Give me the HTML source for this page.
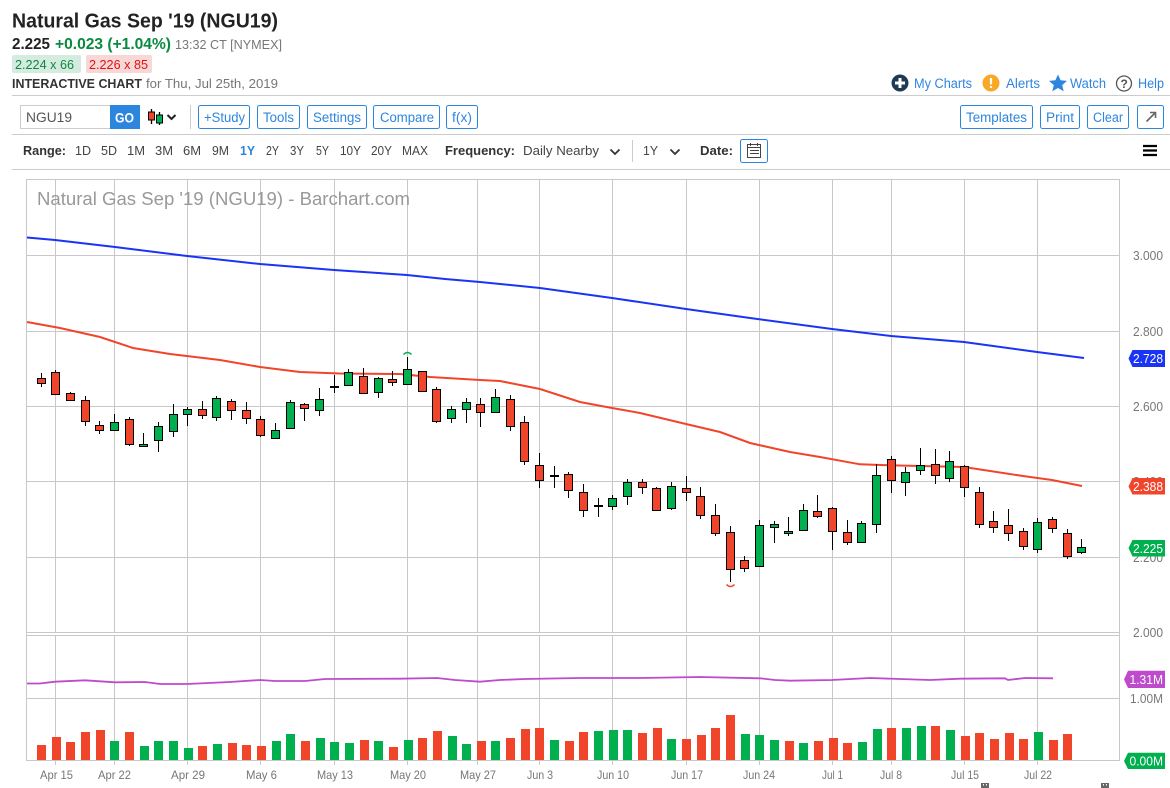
<!DOCTYPE html>
<html><head><meta charset="utf-8"><title>Natural Gas Sep '19 (NGU19)</title>
<style>
html,body{margin:0;padding:0;background:#fff;width:1170px;height:788px;overflow:hidden}
svg{display:block;position:absolute;left:0;top:0}
text{font-family:"Liberation Sans",sans-serif}
.b{fill:#2d86de;font-size:13.5px}
.r{fill:#444;font-size:13px}
.k{font-weight:bold;fill:#333;font-size:13px}
.a{fill:#777;font-size:12.5px}
.d{fill:#777;font-size:12px}
.t{fill:#fff;font-size:13px}
.btn{fill:#fff;stroke:#2d86de;stroke-width:1}
</style></head><body>
<svg width="1170" height="788" viewBox="0 0 1170 788" xmlns="http://www.w3.org/2000/svg">
<!-- header -->
<text x="12" y="27.5" font-size="20" font-weight="bold" fill="#222" textLength="266" lengthAdjust="spacingAndGlyphs">Natural Gas Sep '19 (NGU19)</text>
<text x="12" y="49" font-size="15.5" font-weight="bold" fill="#222" textLength="38" lengthAdjust="spacingAndGlyphs">2.225</text>
<text x="55" y="49" font-size="15.5" font-weight="bold" fill="#0a8a3f" textLength="116" lengthAdjust="spacingAndGlyphs">+0.023 (+1.04%)</text>
<text x="175" y="49" font-size="13" fill="#777" textLength="107" lengthAdjust="spacingAndGlyphs">13:32 CT [NYMEX]</text>
<rect x="12" y="55" width="69" height="18" rx="2" fill="#d5ebe0"/>
<text x="15" y="69" font-size="13" fill="#0a8a3f" textLength="59" lengthAdjust="spacingAndGlyphs">2.224 x 66</text>
<rect x="86" y="55" width="66" height="18" rx="2" fill="#f8d7d7"/>
<text x="89" y="69" font-size="13" fill="#e21212" textLength="59" lengthAdjust="spacingAndGlyphs">2.226 x 85</text>
<text x="12" y="88" class="k" textLength="130" lengthAdjust="spacingAndGlyphs">INTERACTIVE CHART</text>
<text x="146" y="88" font-size="13" fill="#777" textLength="132" lengthAdjust="spacingAndGlyphs">for Thu, Jul 25th, 2019</text>

<!-- top right links -->
<circle cx="900" cy="83" r="8.5" fill="#1f3a52"/><path d="M900 78v10M895 83h10" stroke="#fff" stroke-width="3"/>
<text x="914" y="88" class="b" textLength="58" lengthAdjust="spacingAndGlyphs">My Charts</text>
<circle cx="991" cy="83" r="8.5" fill="#f9a825"/><path d="M991 78v6.5M991 86v2" stroke="#fff" stroke-width="2.2"/>
<text x="1006" y="88" class="b" textLength="34" lengthAdjust="spacingAndGlyphs">Alerts</text>
<path d="M1058 74.5l2.6 5.8 6.4.6-4.8 4.2 1.5 6.2-5.7-3.3-5.7 3.3 1.5-6.2-4.8-4.2 6.4-.6z" fill="#2d86de"/>
<text x="1070" y="88" class="b" textLength="36" lengthAdjust="spacingAndGlyphs">Watch</text>
<circle cx="1124" cy="83.5" r="7.5" fill="none" stroke="#555" stroke-width="1.3"/>
<text x="1120.5" y="88" font-size="12" font-weight="bold" fill="#555">?</text>
<text x="1138" y="88" class="b" textLength="26" lengthAdjust="spacingAndGlyphs">Help</text>

<path d="M12 95.5H1170M12 134.5H1170M12 169.5H1170" stroke="#ccc" stroke-width="1"/>

<!-- toolbar -->
<rect x="20.5" y="105.5" width="90" height="23" fill="#fff" stroke="#ccc"/>
<text x="26" y="122" font-size="14" fill="#555" textLength="46" lengthAdjust="spacingAndGlyphs">NGU19</text>
<rect x="110" y="105" width="30" height="24" fill="#2d86de"/>
<text x="115" y="122.5" font-size="13.5" font-weight="bold" fill="#fff" textLength="19" lengthAdjust="spacingAndGlyphs">GO</text>
<path d="M151.5 109v15M159.5 112v13" stroke="#000" stroke-width="1.3"/>
<rect x="148.5" y="112" width="6" height="8" fill="#f1452b" stroke="#000"/>
<rect x="156.5" y="115" width="6" height="8" fill="#00af4d" stroke="#000"/>
<path d="M167.5 115l4 4 4-4" fill="none" stroke="#222" stroke-width="2"/>
<path d="M190.5 105V129" stroke="#ccc"/>
<rect class="btn" x="198.5" y="105.5" width="51" height="23" rx="2"/><text x="204" y="122" class="b" textLength="41" lengthAdjust="spacingAndGlyphs">+Study</text>
<rect class="btn" x="257.5" y="105.5" width="42" height="23" rx="2"/><text x="263" y="122" class="b" textLength="31" lengthAdjust="spacingAndGlyphs">Tools</text>
<rect class="btn" x="307.5" y="105.5" width="59" height="23" rx="2"/><text x="313" y="122" class="b" textLength="48" lengthAdjust="spacingAndGlyphs">Settings</text>
<rect class="btn" x="373.5" y="105.5" width="66" height="23" rx="2"/><text x="380" y="122" class="b" textLength="54" lengthAdjust="spacingAndGlyphs">Compare</text>
<rect class="btn" x="446.5" y="105.5" width="31" height="23" rx="2"/><text x="452" y="122" class="b" textLength="20" lengthAdjust="spacingAndGlyphs">f(x)</text>
<rect class="btn" x="960.5" y="105.5" width="72" height="23" rx="2"/><text x="966" y="122" class="b" textLength="61" lengthAdjust="spacingAndGlyphs">Templates</text>
<rect class="btn" x="1040.5" y="105.5" width="39" height="23" rx="2"/><text x="1046" y="122" class="b" textLength="28" lengthAdjust="spacingAndGlyphs">Print</text>
<rect class="btn" x="1087.5" y="105.5" width="41" height="23" rx="2"/><text x="1093" y="122" class="b" textLength="30" lengthAdjust="spacingAndGlyphs">Clear</text>
<rect class="btn" x="1137.5" y="105.5" width="26" height="23" rx="2"/>
<path d="M1146.5 121.5l9-9M1150 112.5h5.5v5.5" fill="none" stroke="#666" stroke-width="1.6"/>

<!-- range row -->
<text x="23" y="155" class="k" textLength="43" lengthAdjust="spacingAndGlyphs">Range:</text>
<g class="r">
<text x="75" y="155" class="r" textLength="16" lengthAdjust="spacingAndGlyphs">1D</text>
<text x="101" y="155" class="r" textLength="16" lengthAdjust="spacingAndGlyphs">5D</text>
<text x="127" y="155" class="r" textLength="18" lengthAdjust="spacingAndGlyphs">1M</text>
<text x="155" y="155" class="r" textLength="18" lengthAdjust="spacingAndGlyphs">3M</text>
<text x="183" y="155" class="r" textLength="18" lengthAdjust="spacingAndGlyphs">6M</text>
<text x="212" y="155" class="r" textLength="17" lengthAdjust="spacingAndGlyphs">9M</text>
<text x="240" y="155" font-size="13" font-weight="bold" fill="#2d86de" textLength="15" lengthAdjust="spacingAndGlyphs">1Y</text>
<text x="266" y="155" class="r" textLength="13" lengthAdjust="spacingAndGlyphs">2Y</text>
<text x="290" y="155" class="r" textLength="14" lengthAdjust="spacingAndGlyphs">3Y</text>
<text x="316" y="155" class="r" textLength="13" lengthAdjust="spacingAndGlyphs">5Y</text>
<text x="340" y="155" class="r" textLength="21" lengthAdjust="spacingAndGlyphs">10Y</text>
<text x="371" y="155" class="r" textLength="21" lengthAdjust="spacingAndGlyphs">20Y</text>
<text x="402" y="155" class="r" textLength="26" lengthAdjust="spacingAndGlyphs">MAX</text>
</g>
<text x="445" y="155" class="k" textLength="70" lengthAdjust="spacingAndGlyphs">Frequency:</text>
<text x="523" y="155" class="r" textLength="76" lengthAdjust="spacingAndGlyphs">Daily Nearby</text>
<path d="M610.5 149.5l4.5 4.5 4.5-4.5M670.5 149.5l4.5 4.5 4.5-4.5" fill="none" stroke="#333" stroke-width="1.8"/>
<path d="M632.5 140V162" stroke="#ccc"/>
<text x="643" y="155" class="r" textLength="15" lengthAdjust="spacingAndGlyphs">1Y</text>
<text x="700" y="155" class="k" textLength="33" lengthAdjust="spacingAndGlyphs">Date:</text>
<rect class="btn" x="740.5" y="139.5" width="27" height="23" rx="2"/>
<rect x="747.5" y="144.5" width="13" height="13" fill="none" stroke="#444"/>
<path d="M747.5 147.5h13M750.5 143v3M757.5 143v3M750 150.5h9M750 153.5h9" stroke="#444" fill="none"/>
<path d="M1143 146h14M1143 150.500h14M1143 155h14" stroke="#000" stroke-width="2.2"/>

<!-- chart grid -->
<g shape-rendering="crispEdges" stroke="#c8c8c8" stroke-width="1" fill="none">
<rect x="26.500" y="179.500" width="1093" height="581"/>
<path d="M27 255.500H1119M27 331.500H1119M27 406.500H1119M27 481.500H1119M27 557.500H1119M27 632.500H1119M27 635.500H1119M27 698.500H1119"/>
<path d="M55.500 180V633M114.500 180V633M187.500 180V633M260.500 180V633M334.500 180V633M407.500 180V633M477.500 180V633M539.500 180V633M612.500 180V633M686.500 180V633M759.500 180V633M832.500 180V633M891.500 180V633M964.500 180V633M1037.500 180V633"/>
<path d="M55.500 636V765M114.500 636V765M187.500 636V765M260.500 636V765M334.500 636V765M407.500 636V765M477.500 636V765M539.500 636V765M612.500 636V765M686.500 636V765M759.500 636V765M832.500 636V765M891.500 636V765M964.500 636V765M1037.500 636V765"/>
</g>
<text x="37" y="205" font-size="18" fill="#999" textLength="373" lengthAdjust="spacingAndGlyphs">Natural Gas Sep '19 (NGU19) - Barchart.com</text>

<!-- MAs -->
<polyline fill="none" stroke="#1a34f5" stroke-width="2" points="27,237.500 55,240 115,247 187,256 260,264 334,270 407,275 445,279 480,282 540,288 612,298 686,309 750,318 832,329 891,336 964,342 1037,352 1084,358"/>
<polyline fill="none" stroke="#f1452b" stroke-width="2" points="27,322 60,328 100,337 133,348 170,354 220,360 260,367 300,372 340,373.500 400,374 430,377 480,380 500,381 510,383 540,389 580,402 612,408 640,413 686,424 720,432 750,443 790,452 820,457 860,464.300 880,465 920,466 964,467 1023,476 1052,480 1082,486"/>

<!-- wicks -->
<path stroke="#000" stroke-width="1" fill="none" shape-rendering="crispEdges" d="M41.500 373V387M55.500 370V395M70.500 392V401M85.500 396V426M99.500 421V434M114.500 414V431M129.500 417V446M143.500 433V446M158.500 422V452M173.500 404V437M187.500 407V426M202.500 401V419M216.500 396V421M231.500 399V420M246.500 402V424M260.500 416V437M275.500 423V438M290.500 400V429M304.500 403V421M319.500 388V416M334.500 375V393M348.500 369V385M363.500 368V394M378.500 377V398M392.500 371V386M407.500 357V384M422.500 371V392M436.500 387V423M451.500 406V423M466.500 398V423M480.500 398V427M495.500 389V413M510.500 395V431M524.500 416V465M539.500 453V488M554.500 466V488M568.500 472V498M583.500 484V517M598.500 498V517M612.500 495V510M627.500 479V505M642.500 479V494M656.500 487V511M671.500 482V510M686.500 476V501M700.500 487V519M715.500 504V536M730.500 526V582M744.500 556V572M759.500 520V567M774.500 521V543M788.500 517V536M803.500 504V531M817.500 495V518M832.500 507V550M847.500 520V545M861.500 521V543M876.500 464V533M891.500 456V493M905.500 467V496M920.500 448V475M935.500 449V484M949.500 451V482M964.500 465V497M979.500 487V528M993.500 511V533M1008.500 509V541M1023.500 528V550M1037.500 518V553M1052.500 517V533M1067.500 529V559M1081.500 539V554"/>
<path stroke="#000" stroke-width="2" shape-rendering="crispEdges" d="M330 387H339M550 476H559M594 506H603"/>
<!-- red bodies -->
<path fill="#f1452b" stroke="#000" stroke-width="1" shape-rendering="crispEdges" d="M37.500 378.500h8v5h-8zM51.500 372.500h8v22h-8zM66.500 393.500h8v7h-8zM81.500 400.500h8v21h-8zM95.500 425.500h8v5h-8zM125.500 419.500h8v25h-8zM198.500 409.500h8v6h-8zM227.500 401.500h8v9h-8zM242.500 410.500h8v8h-8zM256.500 419.500h8v16h-8zM300.500 404.500h8v4h-8zM359.500 376.500h8v17h-8zM388.500 379.500h8v3h-8zM418.500 371.500h8v20h-8zM432.500 389.500h8v32h-8zM476.500 404.500h8v8h-8zM506.500 399.500h8v27h-8zM520.500 422.500h8v39h-8zM535.500 465.500h8v15h-8zM564.500 474.500h8v16h-8zM579.500 492.500h8v18h-8zM638.500 482.500h8v5h-8zM652.500 488.500h8v22h-8zM682.500 488.500h8v4h-8zM696.500 496.500h8v19h-8zM711.500 515.500h8v18h-8zM726.500 532.500h8v37h-8zM740.500 560.500h8v8h-8zM813.500 511.500h8v5h-8zM828.500 508.500h8v23h-8zM843.500 532.500h8v10h-8zM887.500 459.500h8v21h-8zM931.500 464.500h8v11h-8zM960.500 466.500h8v21h-8zM975.500 492.500h8v32h-8zM989.500 521.500h8v6h-8zM1004.500 525.500h8v8h-8zM1019.500 531.500h8v15h-8zM1048.500 519.500h8v9h-8zM1063.500 533.500h8v23h-8z"/>
<!-- green bodies -->
<path fill="#00af4d" stroke="#000" stroke-width="1" shape-rendering="crispEdges" d="M110.500 422.500h8v8h-8zM139.500 444.500h8v2h-8zM154.500 426.500h8v14h-8zM169.500 414.500h8v17h-8zM183.500 409.500h8v5h-8zM212.500 398.500h8v19h-8zM271.500 430.500h8v8h-8zM286.500 402.500h8v26h-8zM315.500 399.500h8v11h-8zM344.500 372.500h8v13h-8zM374.500 378.500h8v14h-8zM403.500 369.500h8v15h-8zM447.500 409.500h8v9h-8zM462.500 402.500h8v7h-8zM491.500 397.500h8v15h-8zM608.500 498.500h8v8h-8zM623.500 482.500h8v14h-8zM667.500 486.500h8v22h-8zM755.500 525.500h8v41h-8zM770.500 524.500h8v3h-8zM784.500 531.500h8v2h-8zM799.500 510.500h8v20h-8zM857.500 523.500h8v19h-8zM872.500 475.500h8v49h-8zM901.500 472.500h8v10h-8zM916.500 465.500h8v5h-8zM945.500 461.500h8v17h-8zM1033.500 522.500h8v27h-8zM1077.500 547.500h8v5h-8z"/>
<!-- hi/lo arcs -->
<path d="M403.500 354.500q4-4 8 0" fill="none" stroke="#00af4d" stroke-width="1.500"/>
<path d="M726.500 584.500q4 4 8 0" fill="none" stroke="#f1452b" stroke-width="1.500"/>

<!-- purple line -->
<polyline fill="none" stroke="#be4bcb" stroke-width="1.800" points="27,683.500 40,683.500 55,681.700 85,680.300 115,682.300 145,682 160,684 187,684 230,682 260,680 275,681 305,681 325,679 400,678.700 437,678 455,680 480,681.700 500,680 525,679 580,678 640,678 700,677 760,678.300 775,680 790,680.700 832,680 870,678 900,679 930,680 960,678.700 1005,678.300 1008,680 1025,678 1053,678.300"/>

<!-- volume -->
<path fill="#f1452b" d="M37 745h9v15h-9zM52 737h9v23h-9zM66 742h9v18h-9zM81 732h9v28h-9zM96 730h9v30h-9zM125 732h9v28h-9zM198 746h9v14h-9zM228 743h9v17h-9zM242 745h9v15h-9zM257 746h9v14h-9zM301 741h9v19h-9zM360 740h9v20h-9zM389 747h9v13h-9zM418 738h9v22h-9zM433 731h9v29h-9zM477 741h9v19h-9zM506 738h9v22h-9zM521 729h9v31h-9zM535 728h9v32h-9zM565 741h9v19h-9zM579 732h9v28h-9zM638 733h9v27h-9zM653 728h9v32h-9zM682 739h9v21h-9zM697 735h9v25h-9zM711 728h9v32h-9zM726 715h9v45h-9zM785 741h9v19h-9zM814 741h9v19h-9zM829 738h9v22h-9zM843 743h9v17h-9zM887 728h9v32h-9zM931 726h9v34h-9zM961 736h9v24h-9zM975 733h9v27h-9zM990 739h9v21h-9zM1005 733h9v27h-9zM1019 739h9v21h-9zM1049 740h9v20h-9zM1063 734h9v26h-9z"/>
<path fill="#00af4d" d="M110 741h9v19h-9zM140 746h9v14h-9zM154 741h9v19h-9zM169 741h9v19h-9zM184 748h9v12h-9zM213 744h9v16h-9zM272 741h9v19h-9zM286 734h9v26h-9zM316 738h9v22h-9zM330 742h9v18h-9zM345 743h9v17h-9zM374 741h9v19h-9zM404 740h9v20h-9zM448 736h9v24h-9zM462 744h9v16h-9zM491 741h9v19h-9zM550 740h9v20h-9zM594 731h9v29h-9zM609 730h9v30h-9zM623 730h9v30h-9zM667 739h9v21h-9zM741 734h9v26h-9zM755 735h9v25h-9zM770 740h9v20h-9zM799 743h9v17h-9zM858 742h9v18h-9zM873 729h9v31h-9zM902 728h9v32h-9zM917 726h9v34h-9zM946 730h9v30h-9zM1034 732h9v28h-9z"/>

<!-- axis labels -->
<g class="a">
<text x="1133" y="260" class="a" textLength="30" lengthAdjust="spacingAndGlyphs">3.000</text>
<text x="1133" y="336" class="a" textLength="30" lengthAdjust="spacingAndGlyphs">2.800</text>
<text x="1133" y="411" class="a" textLength="30" lengthAdjust="spacingAndGlyphs">2.600</text>
<text x="1133" y="486" class="a" textLength="30" lengthAdjust="spacingAndGlyphs">2.400</text>
<text x="1133" y="562" class="a" textLength="30" lengthAdjust="spacingAndGlyphs">2.200</text>
<text x="1133" y="637" class="a" textLength="30" lengthAdjust="spacingAndGlyphs">2.000</text>
<text x="1130" y="703" class="a" textLength="33" lengthAdjust="spacingAndGlyphs">1.00M</text>
</g>
<path d="M1128.500 358.500l4-8.500H1165v17h-32.500z" fill="#1a34f5"/>
<text x="1133" y="363" class="t" textLength="30" lengthAdjust="spacingAndGlyphs">2.728</text>
<path d="M1128.500 486.500l4-8.500H1165v16.500h-32.500z" fill="#f1452b"/>
<text x="1133" y="491" class="t" textLength="30" lengthAdjust="spacingAndGlyphs">2.388</text>
<path d="M1128.500 548l4-8H1165v16.500h-32.500z" fill="#00af4d"/>
<text x="1133" y="553" class="t" textLength="30" lengthAdjust="spacingAndGlyphs">2.225</text>
<path d="M1124 679.500l4-8.700H1165v17.200h-37z" fill="#be4bcb"/>
<text x="1129.500" y="684" class="t" textLength="33.500" lengthAdjust="spacingAndGlyphs">1.31M</text>
<path d="M1124 761l4-8.300H1165v16.300h-37z" fill="#00af4d"/>
<text x="1129.500" y="765.500" class="t" textLength="33.500" lengthAdjust="spacingAndGlyphs">0.00M</text>

<!-- date labels -->
<text x="40" y="779" class="d" textLength="33" lengthAdjust="spacingAndGlyphs">Apr 15</text>
<text x="98" y="779" class="d" textLength="33" lengthAdjust="spacingAndGlyphs">Apr 22</text>
<text x="171" y="779" class="d" textLength="34" lengthAdjust="spacingAndGlyphs">Apr 29</text>
<text x="246" y="779" class="d" textLength="31" lengthAdjust="spacingAndGlyphs">May 6</text>
<text x="317" y="779" class="d" textLength="36" lengthAdjust="spacingAndGlyphs">May 13</text>
<text x="390" y="779" class="d" textLength="36" lengthAdjust="spacingAndGlyphs">May 20</text>
<text x="460" y="779" class="d" textLength="36" lengthAdjust="spacingAndGlyphs">May 27</text>
<text x="527" y="779" class="d" textLength="26" lengthAdjust="spacingAndGlyphs">Jun 3</text>
<text x="597" y="779" class="d" textLength="32" lengthAdjust="spacingAndGlyphs">Jun 10</text>
<text x="671" y="779" class="d" textLength="32" lengthAdjust="spacingAndGlyphs">Jun 17</text>
<text x="743" y="779" class="d" textLength="32" lengthAdjust="spacingAndGlyphs">Jun 24</text>
<text x="822" y="779" class="d" textLength="21" lengthAdjust="spacingAndGlyphs">Jul 1</text>
<text x="880" y="779" class="d" textLength="22" lengthAdjust="spacingAndGlyphs">Jul 8</text>
<text x="951" y="779" class="d" textLength="28" lengthAdjust="spacingAndGlyphs">Jul 15</text>
<text x="1024" y="779" class="d" textLength="28" lengthAdjust="spacingAndGlyphs">Jul 22</text>
<rect x="981" y="783" width="8" height="5" fill="#666"/>
<rect x="1101" y="783" width="8" height="5" fill="#666"/>
<path d="M983.500 784v1.500M986.500 784v1.500M1103.500 784v1.500M1106.500 784v1.500" stroke="#fff"/>
</svg>
</body></html>
